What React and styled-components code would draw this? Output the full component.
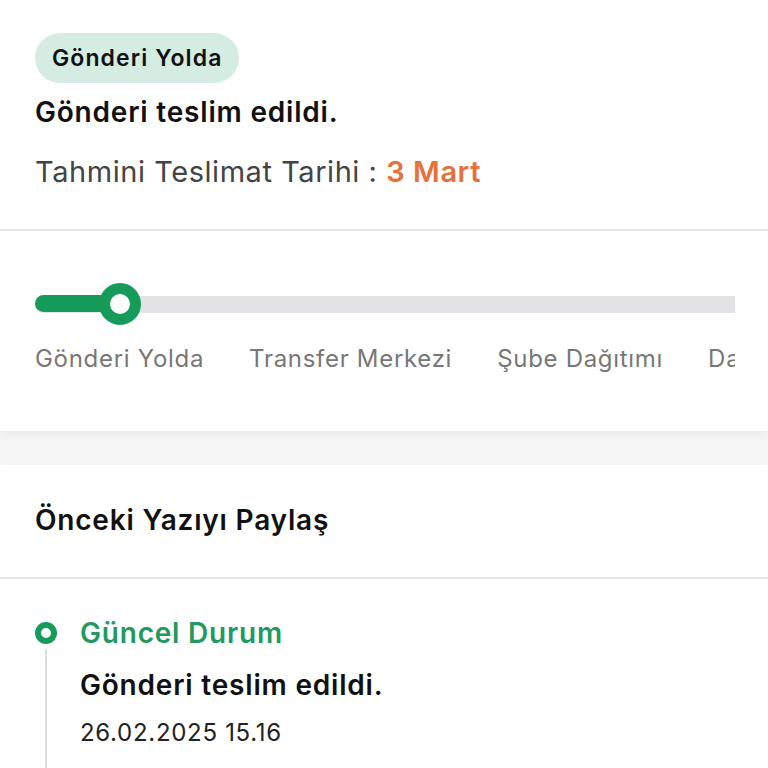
import React from "react";
import styled, { createGlobalStyle } from "styled-components";

const GlobalStyle = createGlobalStyle`
  body {
    margin: 0;
    background: #f6f6f6;
    font-family: Inter, "Noto Sans", sans-serif;
    color: #111;
  }
`;

const Page = styled.div`
  width: 768px;
  height: 768px;
  overflow: hidden;
  display: flex;
  flex-direction: column;
  gap: 34px;
`;

const Card = styled.div`
  background: #fff;
  box-shadow: 0 4px 10px rgba(0, 0, 0, 0.05);
`;

const Section = styled.div`
  padding: ${(p) => p.$pad};
  border-bottom: ${(p) => (p.$divider ? "2px solid #e6e6e6" : "none")};
  display: flex;
  flex-direction: column;
  align-items: flex-start;
`;

const Pill = styled.span`
  display: inline-flex;
  align-items: center;
  height: 50px;
  padding: 0 17px;
  border-radius: 25px;
  background: #d4ece1;
  font-size: 23px;
  font-weight: 600;
  letter-spacing: 1.1px;
  color: #111;
`;

const Title = styled.div`
  margin-top: ${(p) => p.$top || 0}px;
  font-size: 28px;
  font-weight: 600;
  line-height: 32px;
  letter-spacing: 0.8px;
  color: ${(p) => p.$color || "#111"};
`;

const EstDate = styled.div`
  margin-top: 27px;
  font-size: 29px;
  line-height: 34px;
  letter-spacing: 0.55px;
  color: #444;

  strong {
    color: #e8703a;
    font-weight: 600;
  }
`;

const Progress = styled.div`
  width: 700px;
  overflow: hidden;
`;

const Track = styled.div`
  position: relative;
  height: 42px;
  display: flex;
  align-items: center;
`;

const Rail = styled.div`
  width: 100%;
  height: 17px;
  background: #e3e3e5;
  border-radius: 9px 0 0 9px;
`;

const Fill = styled.div`
  position: absolute;
  left: 0;
  top: 12px;
  height: 17px;
  border-radius: 9px;
  background: #179b5b;
`;

const Knob = styled.div`
  position: absolute;
  top: 0;
  width: 42px;
  height: 42px;
  box-sizing: border-box;
  border-radius: 50%;
  border: 11px solid #179b5b;
  background: #fff;
`;

const Steps = styled.div`
  display: flex;
  gap: 45px;
  margin-top: 19px;
  white-space: nowrap;
`;

const Step = styled.span`
  font-size: 24px;
  line-height: 30px;
  letter-spacing: 0.7px;
  color: #777;
`;

const Timeline = styled.div`
  display: flex;
  flex-direction: column;
`;

const EventHead = styled.div`
  display: flex;
  align-items: center;
  gap: 23px;
`;

const Dot = styled.span`
  width: 22px;
  height: 22px;
  box-sizing: border-box;
  border-radius: 50%;
  border: 6px solid #179b5b;
  flex-shrink: 0;
`;

const EventBody = styled.div`
  margin-left: 10px;
  padding-left: 33px;
  border-left: 2px solid #dedede;
  padding-top: 20px;
  padding-bottom: 40px;
`;

const Stamp = styled.div`
  margin-top: 17px;
  font-size: 24px;
  line-height: 30px;
  letter-spacing: 0.7px;
  color: #222;
`;

export default function App() {
  const steps = ["Gönderi Yolda", "Transfer Merkezi", "Şube Dağıtımı", "Dağıtımda", "Teslim Edildi"];
  const done = 85;

  return (
    <>
      <GlobalStyle />
      <Page>
        <Card>
          <Section $pad="33px 35px 40px" $divider>
            <Pill>Gönderi Yolda</Pill>
            <Title $top={13}>Gönderi teslim edildi.</Title>
            <EstDate>
              Tahmini Teslimat Tarihi : <strong>3 Mart</strong>
            </EstDate>
          </Section>
          <Section $pad="52px 35px 57px">
            <Progress>
              <Track>
                <Rail />
                <Fill style={{ width: done }} />
                <Knob style={{ left: done - 21 }} />
              </Track>
              <Steps>
                {steps.map((s) => (
                  <Step key={s}>{s}</Step>
                ))}
              </Steps>
            </Progress>
          </Section>
        </Card>
        <Card>
          <Section $pad="39px 35px 41px" $divider>
            <Title>Önceki Yazıyı Paylaş</Title>
          </Section>
          <Section $pad="38px 35px 0">
            <Timeline>
              <EventHead>
                <Dot />
                <Title $color="#22995f">Güncel Durum</Title>
              </EventHead>
              <EventBody>
                <Title>Gönderi teslim edildi.</Title>
                <Stamp>26.02.2025 15.16</Stamp>
              </EventBody>
            </Timeline>
          </Section>
        </Card>
      </Page>
    </>
  );
}
